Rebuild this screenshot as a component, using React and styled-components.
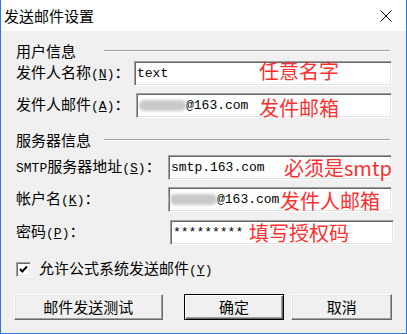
import React from "react";
import styled, { createGlobalStyle, css } from "styled-components";

const CJK = `"Noto Sans CJK SC", "Noto Sans", sans-serif`;
const MONO = `"Liberation Mono", "Noto Sans CJK SC", monospace`;

const GlobalStyle = createGlobalStyle`
  html, body { margin: 0; padding: 0; background: #f0f0f0; }
  body { font-family: ${CJK}; }
`;

const Window = styled.div`
  width: 407px;
  height: 334px;
  box-sizing: border-box;
  border: 1px solid #2a7ad2;
  border-top: none;
  display: flex;
  flex-direction: column;
  background: #f0f0f0;
  font-family: ${CJK};
  color: #000;
`;

const TitleBar = styled.div`
  height: 31px;
  flex: none;
  background: #fff;
  display: flex;
  align-items: center;
  justify-content: space-between;
  padding: 0 14px 0 3px;
`;

const Title = styled.span`
  font-size: 15px;
  line-height: 18px;
`;

const Body = styled.div`
  flex: 1;
  display: flex;
  flex-direction: column;
  padding: 12px 14px 0 15px;
`;

const Section = styled.div`
  display: flex;
  align-items: center;
  height: 16px;
  margin-top: ${(p) => p.$mt || 0}px;
  font-size: 15px;
  line-height: 16px;
`;

const SectionTitle = styled.span`
  width: 88px;
  flex: none;
`;

const Rule = styled.span`
  flex: 1;
  height: 0;
  border-top: 1px solid #a0a0a0;
  border-bottom: 1px solid #fff;
  margin-right: 2px;
`;

const Row = styled.div`
  display: flex;
  align-items: center;
  height: 25px;
  margin-top: ${(p) => p.$mt || 0}px;
`;

const Label = styled.span`
  font-size: 15px;
  line-height: 18px;
  white-space: nowrap;
`;

const Ascii = styled.span`
  font-family: ${MONO};
  font-size: 13px;
`;

const Field = styled.div`
  position: relative;
  box-sizing: border-box;
  height: 25px;
  width: ${(p) => p.$w}px;
  margin-left: auto;
  margin-right: ${(p) => p.$mr || 0}px;
  background: #fff;
  border: 1px solid;
  border-color: #a0a0a0 #fff #fff #a0a0a0;
  box-shadow: inset 1px 1px #696969, inset -1px -1px #e3e3e3;
  display: flex;
  align-items: center;
  padding-left: 2px;
  font-family: ${MONO};
  font-size: 13px;
  white-space: nowrap;
`;

const Blur = styled.span`
  display: inline-block;
  width: ${(p) => p.$w}px;
  height: 11px;
  margin-left: ${(p) => p.$ml || 0}px;
  background: #c9c9c9;
  filter: blur(1.6px);
  border-radius: 5px;
`;

const Note = styled.span`
  position: absolute;
  left: ${(p) => p.$x}px;
  top: ${(p) => p.$y}px;
  font-family: ${CJK};
  font-size: 20px;
  line-height: 20px;
  color: #ff2f2f;
  pointer-events: none;
`;

const CheckRow = styled.label`
  display: flex;
  align-items: center;
  gap: 8px;
  height: 16px;
  margin-top: ${(p) => p.$mt || 0}px;
  font-size: 15px;
  line-height: 18px;
`;

const Box = styled.span`
  box-sizing: border-box;
  width: 15px;
  height: 15px;
  flex: none;
  background: #fff;
  border: 1px solid;
  border-color: #a0a0a0 #fff #fff #a0a0a0;
  box-shadow: inset 1px 1px #696969, inset -1px -1px #e3e3e3;
  display: flex;
  align-items: center;
  justify-content: center;
`;

const Buttons = styled.div`
  display: flex;
  margin-top: ${(p) => p.$mt || 0}px;
  margin-left: -2px;
`;

const Button = styled.button`
  box-sizing: border-box;
  height: 26px;
  width: ${(p) => p.$w}px;
  margin-left: ${(p) => p.$ml || 0}px;
  padding: 0;
  background: #f0f0f0;
  font-family: ${CJK};
  font-size: 15px;
  line-height: 18px;
  color: #000;
  border: 1px solid;
  border-color: #fff #696969 #696969 #fff;
  box-shadow: inset -1px -1px #a0a0a0, inset 1px 1px #e3e3e3;
  ${(p) =>
    p.$default &&
    css`
      border: 1px solid #000;
      box-shadow: inset 1px 1px #fff, inset -1px -1px #696969,
        inset -2px -2px #a0a0a0;
    `}
`;

const CloseIcon = () => (
  <svg width="12" height="12" viewBox="0 0 12 12">
    <path d="M0.5 0.5 L11.5 11.5 M11.5 0.5 L0.5 11.5" stroke="#000" strokeWidth="1" />
  </svg>
);

const CheckIcon = () => (
  <svg width="11" height="11" viewBox="0 0 11 11">
    <path d="M2 5 L4.3 7.5 L9 2.5" stroke="#000" strokeWidth="2" fill="none" />
  </svg>
);

const Acc = ({ k }) => (
  <Ascii>
    (<u>{k}</u>)
  </Ascii>
);

export default function App() {
  return (
    <>
      <GlobalStyle />
      <Window>
        <TitleBar>
          <Title>发送邮件设置</Title>
          <CloseIcon />
        </TitleBar>
        <Body>
          <Section>
            <SectionTitle>用户信息</SectionTitle>
            <Rule />
          </Section>
          <Row $mt={2}>
            <Label>
              发件人名称<Acc k="N" />：
            </Label>
            <Field $w={258}>
              text
              <Note $x={124} $y={-1}>任意名字</Note>
            </Field>
          </Row>
          <Row $mt={7}>
            <Label>
              发件人邮件<Acc k="A" />：
            </Label>
            <Field $w={256}>
              <Blur $w={47} />
              @163.com
              <Note $x={122} $y={4}>发件邮箱</Note>
            </Field>
          </Row>
          <Section $mt={14}>
            <SectionTitle>服务器信息</SectionTitle>
            <Rule />
          </Section>
          <Row $mt={7}>
            <Label>
              <Ascii>SMTP</Ascii>服务器地址<Acc k="S" />：
            </Label>
            <Field $w={224}>
              smtp.163.com
              <Note $x={115} $y={2}>必须是smtp</Note>
            </Field>
          </Row>
          <Row $mt={7}>
            <Label>
              帐户名<Acc k="K" />：
            </Label>
            <Field $w={224}>
              <Blur $w={47} $ml={-1} />
              @163.com
              <Note $x={111} $y={3}>发件人邮箱</Note>
            </Field>
          </Row>
          <Row $mt={8}>
            <Label>
              密码<Acc k="P" />：
            </Label>
            <Field $w={224} $mr={-2}>
              *********
              <Note $x={78} $y={2}>填写授权码</Note>
            </Field>
          </Row>
          <CheckRow $mt={16}>
            <Box>
              <CheckIcon />
            </Box>
            <span>
              允许公式系统发送邮件<Acc k="Y" />
            </span>
          </CheckRow>
          <Buttons $mt={17}>
            <Button $w={149}>邮件发送测试</Button>
            <Button $w={101} $ml={21} $default>
              确定
            </Button>
            <Button $w={101} $ml={7}>
              取消
            </Button>
          </Buttons>
        </Body>
      </Window>
    </>
  );
}
